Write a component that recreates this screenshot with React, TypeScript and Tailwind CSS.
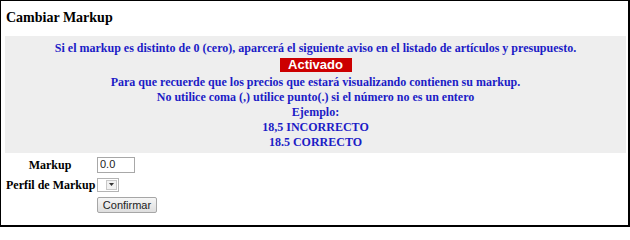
const serif = { fontFamily: '"Liberation Serif", "Times New Roman", serif' };

const mensajes = [
  'Para que recuerde que los precios que estará visualizando contienen su markup.',
  'No utilice coma (,) utilice punto(.) si el número no es un entero',
  'Ejemplo:',
  '18,5 INCORRECTO',
  '18.5 CORRECTO',
];

export default function App() {
  return (
    <div
      className="w-[630px] h-[227px] bg-white border-l border-t border-r-2 border-b-2 border-black px-[4px] font-['Liberation_Serif',serif]"
    >
      <h1 className="text-[14px] font-bold text-black leading-[16px] pt-[9px] pl-[1px] h-[35px]">
        Cambiar Markup
      </h1>

      <div className="bg-[#eeeeee] w-[621px] pt-[5px] pb-[3px] text-center font-bold text-[12px] leading-[15px] text-[#1c1cc6]">
        <p>
          Si el markup es distinto de 0 (cero), aparcerá el siguiente aviso en el listado de artículos y presupuesto.
        </p>
        <div className="flex justify-center mt-[2px]">
          <span className="bg-[#cc0000] text-white w-[72px] h-[14px] leading-[14px] text-[13px] font-bold font-['Liberation_Sans',Arial,sans-serif]">
            Activado
          </span>
        </div>
        <div className="mt-[3px]">
          {mensajes.map((m, i) => (
            <p key={i}>{m}</p>
          ))}
        </div>
      </div>

      <div className="grid grid-cols-[88px_auto] gap-x-[4px] justify-start items-center pt-[2px] text-[12px] font-bold text-black" style={serif}>
        <div className="text-center pl-[2px]">Markup</div>
        <div className="h-[19px] flex items-center">
          <input
            defaultValue="0.0"
            className="w-[38px] h-[16px] border border-[#a8a8a8] bg-white px-[2px] text-[11px] font-normal text-[#222] font-['Liberation_Sans',Arial,sans-serif] outline-none"
          />
        </div>

        <div className="text-center pl-[1px] whitespace-nowrap">Perfil de Markup</div>
        <div className="h-[21px] flex items-center">
          <div className="w-[22px] h-[14px] border border-[#b4b4b4] bg-white flex justify-end items-center p-[1px]">
            <div className="w-[11px] h-[10px] border border-[#c8c8c8] bg-[#f1f1f1] flex items-center justify-center">
              <svg width="5" height="3" viewBox="0 0 5 3">
                <path d="M0 0h5L2.5 3z" fill="#333" />
              </svg>
            </div>
          </div>
        </div>

        <div />
        <div className="h-[20px] flex items-center">
          <button className="w-[60px] h-[16px] border border-[#a6a6a6] rounded-[2px] bg-gradient-to-b from-[#f6f6f6] to-[#dedede] text-[11px] font-normal text-[#222] leading-[14px] font-['Liberation_Sans',Arial,sans-serif]">
            Confirmar
          </button>
        </div>
      </div>
    </div>
  );
}
